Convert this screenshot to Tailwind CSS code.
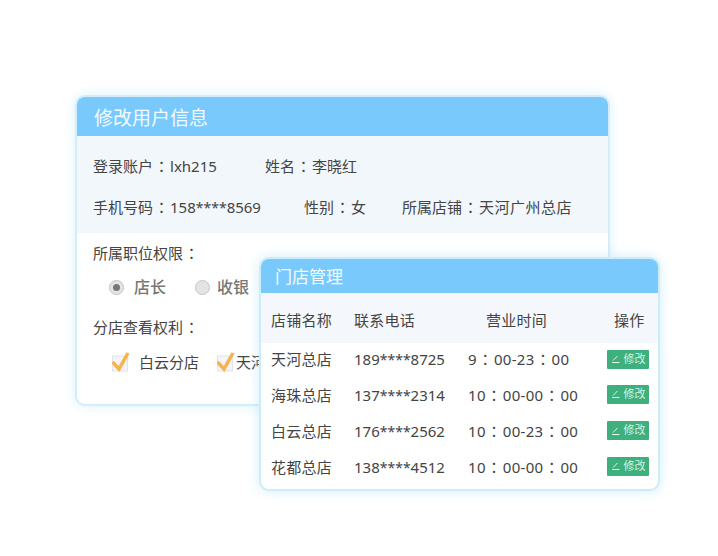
<!DOCTYPE html>
<html lang="zh-CN">
<head>
<meta charset="utf-8">
<script src="https://cdn.jsdelivr.net/npm/@tailwindcss/browser@4"></script>
</head>
<body class="bg-white">
<div class="relative w-[718px] h-[556px] overflow-hidden bg-white text-[15px] text-[#444] font-['Noto_Sans','Noto_Sans_CJK_SC',sans-serif]">
  <!-- user info card -->
  <section class="absolute left-[75px] top-[95px] w-[535px] h-[311px] rounded-[10px] border-2 border-[#d3eefa] bg-white shadow-[0_0_12px_rgba(150,215,250,0.35)] overflow-hidden">
    <h2 class="h-[39px] pl-[17px] bg-[#79c9fd] text-[#f4fbff] text-[19px] leading-[42px]">修改用户信息</h2>
    <div class="h-[97px] pl-[16px] pt-[19px] bg-[#f2f7fc] flex flex-col gap-[18px]">
      <div class="flex h-[22px] leading-[22px]"><span class="w-[172px]">登录账户<span class="inline-block w-[17px] text-center font-['Noto_Sans_CJK_TC']">：</span>lxh215</span><span>姓名<span class="inline-block w-[17px] text-center font-['Noto_Sans_CJK_TC']">：</span>李晓红</span></div>
      <div class="flex h-[22px] leading-[22px] mt-[1px]"><span class="w-[211px]">手机号码<span class="inline-block w-[17px] text-center font-['Noto_Sans_CJK_TC']">：</span>158<span class="text-[14px]">****</span>8569</span><span class="w-[98px]">性别<span class="inline-block w-[17px] text-center font-['Noto_Sans_CJK_TC']">：</span>女</span><span>所属店铺<span class="inline-block w-[17px] text-center font-['Noto_Sans_CJK_TC']">：</span><span class="tracking-[0.5px]">天河广州总店</span></span></div>
    </div>
    <div class="pl-[16px] pt-[9px]">
      <p class="h-[22px] leading-[22px]">所属职位权限<span class="inline-block w-[17px] text-center font-['Noto_Sans_CJK_TC']">：</span></p>
      <div class="flex items-center h-[22px] mt-[12px] pl-[16px] text-[16px] text-[#777] font-medium">
        <span class="w-[15px] h-[15px] rounded-full bg-[#e4e4e4] border border-[#c4c4c4] flex items-center justify-center"><span class="w-[7px] h-[7px] rounded-full bg-[#777]"></span></span>
        <span class="ml-[10px] w-[61px]">店长</span>
        <span class="w-[15px] h-[15px] rounded-full bg-[#e4e4e4] border border-[#c4c4c4]"></span>
        <span class="ml-[7px]">收银</span>
      </div>
      <p class="h-[22px] leading-[22px] mt-[18px]">分店查看权利<span class="inline-block w-[17px] text-center font-['Noto_Sans_CJK_TC']">：</span></p>
      <div class="flex items-center h-[22px] mt-[13px] pl-[19px]">
        <svg class="w-[18px] h-[20px]" viewBox="0 0 18 20"><rect x="0.500" y="4" width="15" height="15" fill="#f4f4fa" stroke="#dfe3ee"/><path d="M0.500 10 L7 17 L16 1" fill="none" stroke="#f9b348" stroke-width="3.500"/></svg>
        <span class="ml-[9px] w-[78px]">白云分店</span>
        <svg class="w-[18px] h-[20px]" viewBox="0 0 18 20"><rect x="0.500" y="4" width="15" height="15" fill="#f4f4fa" stroke="#dfe3ee"/><path d="M0.500 10 L7 17 L16 1" fill="none" stroke="#f9b348" stroke-width="3.500"/></svg>
        <span class="ml-[1px]">天河分店</span>
      </div>
    </div>
  </section>
  <!-- store card -->
  <section class="absolute left-[259px] top-[257px] w-[401px] h-[234px] rounded-[10px] border-2 border-[#cdecfa] bg-white shadow-[0_0_12px_rgba(150,215,250,0.45)] overflow-hidden">
    <h2 class="h-[34px] pl-[14px] bg-[#79c9fd] text-[#f4fbff] text-[17px] leading-[36px]">门店管理</h2>
    <div class="flex items-center h-[50px] pl-[10px] pt-[5px] bg-[#f4f8fd] tracking-[0.25px]">
      <span class="w-[83px]">店铺名称</span><span class="w-[132px]">联系电话</span><span class="w-[128px]">营业时间</span><span>操作</span>
    </div>
    <div class="flex items-center h-[36px] pl-[10px] mt-[-2px]">
      <span class="w-[83px] tracking-[0.25px]">天河总店</span><span class="w-[114px]">189<span class="text-[14px]">****</span>8725</span><span class="w-[139px] tracking-[0.3px]">9<span class="inline-block w-[17px] text-center font-['Noto_Sans_CJK_TC']">：</span>00-23<span class="inline-block w-[17px] text-center font-['Noto_Sans_CJK_TC']">：</span>00</span>
      <span class="flex items-center justify-center w-[42px] h-[19px] rounded-[1px] bg-[#3db07d] text-[#d6f0e4] text-[11px] gap-[3px]"><svg class="w-[10px] h-[10px]" viewBox="0 0 10 10"><path d="M2 6.500 L6.500 2 M1 8.500 H8.500" fill="none" stroke="#e4f5ec" stroke-width="1"/></svg>修改</span>
    </div>
    <div class="flex items-center h-[36px] pl-[10px]">
      <span class="w-[83px] tracking-[0.25px]">海珠总店</span><span class="w-[114px]">137<span class="text-[14px]">****</span>2314</span><span class="w-[139px] tracking-[0.3px]">10<span class="inline-block w-[17px] text-center font-['Noto_Sans_CJK_TC']">：</span>00-00<span class="inline-block w-[17px] text-center font-['Noto_Sans_CJK_TC']">：</span>00</span>
      <span class="flex items-center justify-center w-[42px] h-[19px] mb-[2px] rounded-[1px] bg-[#3db07d] text-[#d6f0e4] text-[11px] gap-[3px]"><svg class="w-[10px] h-[10px]" viewBox="0 0 10 10"><path d="M2 6.500 L6.500 2 M1 8.500 H8.500" fill="none" stroke="#e4f5ec" stroke-width="1"/></svg>修改</span>
    </div>
    <div class="flex items-center h-[36px] pl-[10px]">
      <span class="w-[83px] tracking-[0.25px]">白云总店</span><span class="w-[114px]">176<span class="text-[14px]">****</span>2562</span><span class="w-[139px] tracking-[0.3px]">10<span class="inline-block w-[17px] text-center font-['Noto_Sans_CJK_TC']">：</span>00-23<span class="inline-block w-[17px] text-center font-['Noto_Sans_CJK_TC']">：</span>00</span>
      <span class="flex items-center justify-center w-[42px] h-[19px] mb-[1px] rounded-[1px] bg-[#3db07d] text-[#d6f0e4] text-[11px] gap-[3px]"><svg class="w-[10px] h-[10px]" viewBox="0 0 10 10"><path d="M2 6.500 L6.500 2 M1 8.500 H8.500" fill="none" stroke="#e4f5ec" stroke-width="1"/></svg>修改</span>
    </div>
    <div class="flex items-center h-[36px] pl-[10px]">
      <span class="w-[83px] tracking-[0.25px]">花都总店</span><span class="w-[114px]">138<span class="text-[14px]">****</span>4512</span><span class="w-[139px] tracking-[0.3px]">10<span class="inline-block w-[17px] text-center font-['Noto_Sans_CJK_TC']">：</span>00-00<span class="inline-block w-[17px] text-center font-['Noto_Sans_CJK_TC']">：</span>00</span>
      <span class="flex items-center justify-center w-[42px] h-[19px] mb-[2px] rounded-[1px] bg-[#3db07d] text-[#d6f0e4] text-[11px] gap-[3px]"><svg class="w-[10px] h-[10px]" viewBox="0 0 10 10"><path d="M2 6.500 L6.500 2 M1 8.500 H8.500" fill="none" stroke="#e4f5ec" stroke-width="1"/></svg>修改</span>
    </div>
  </section>
</div>
</body>
</html>
